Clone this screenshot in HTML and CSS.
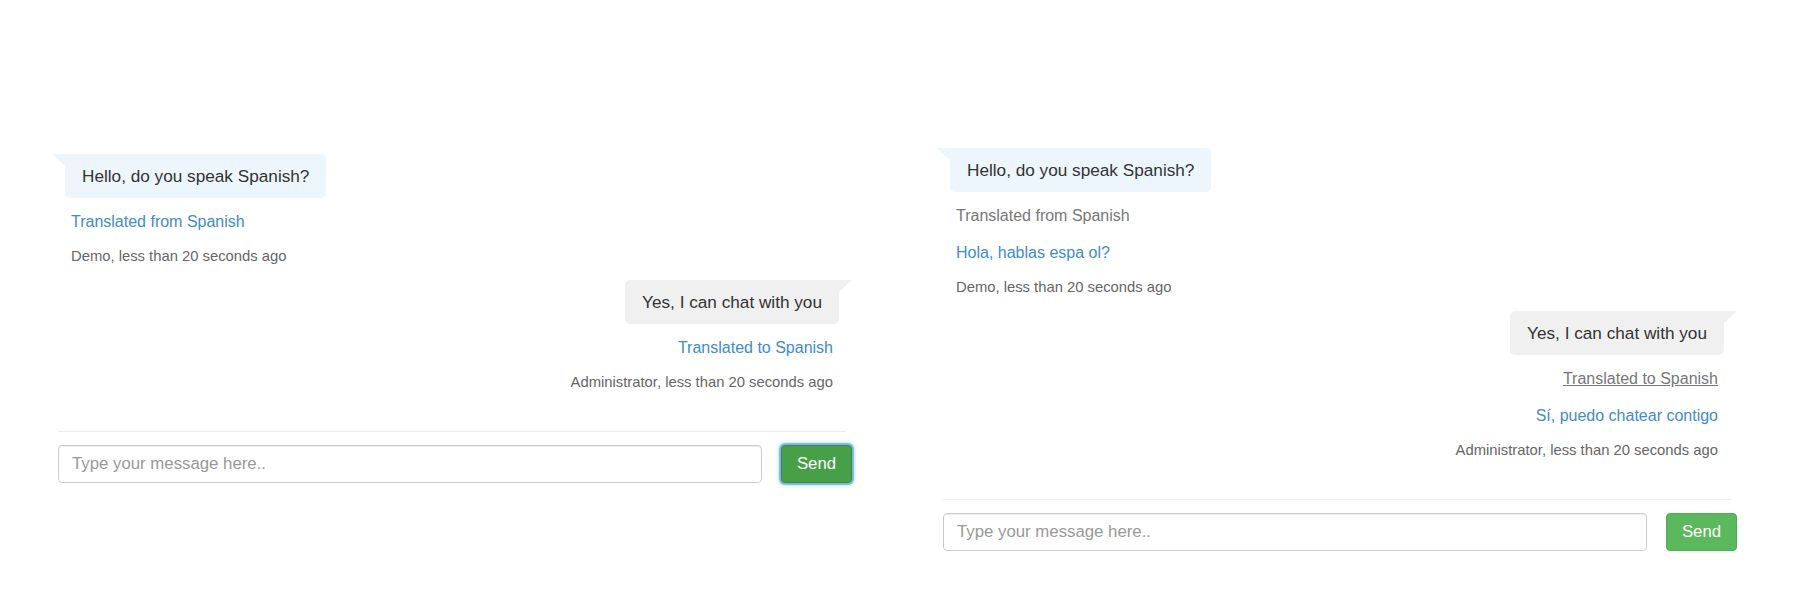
FILE: index.html
```html
<!DOCTYPE html>
<html>
<head>
<meta charset="utf-8">
<link rel="stylesheet" href="styles.css">
</head>
<body>
<div class="page">
  <section class="panel panel-a">
    <div class="messages">
      <div class="msg msg-in">
        <div class="bubble bubble-in">Hello, do you speak Spanish?</div>
        <div class="line link first">Translated from Spanish</div>
        <div class="meta">Demo, less than 20 seconds ago</div>
      </div>
      <div class="msg msg-out">
        <div class="bubble bubble-out">Yes, I can chat with you</div>
        <div class="line link first">Translated to Spanish</div>
        <div class="meta">Administrator, less than 20 seconds ago</div>
      </div>
    </div>
    <hr class="divider">
    <form class="composer">
      <input class="field" type="text" placeholder="Type your message here..">
      <button class="send send-active" type="button">Send</button>
    </form>
  </section>

  <section class="panel panel-b">
    <div class="messages">
      <div class="msg msg-in">
        <div class="bubble bubble-in">Hello, do you speak Spanish?</div>
        <div class="line muted first">Translated from Spanish</div>
        <div class="line translation">Hola, hablas espa ol?</div>
        <div class="meta">Demo, less than 20 seconds ago</div>
      </div>
      <div class="msg msg-out">
        <div class="bubble bubble-out">Yes, I can chat with you</div>
        <div class="line muted underlined first">Translated to Spanish</div>
        <div class="line translation">Sí, puedo chatear contigo</div>
        <div class="meta">Administrator, less than 20 seconds ago</div>
      </div>
    </div>
    <hr class="divider">
    <form class="composer">
      <input class="field" type="text" placeholder="Type your message here..">
      <button class="send" type="button">Send</button>
    </form>
  </section>
</div>
</body>
</html>
```

FILE: styles.css
```css
html, body {
  margin: 0;
  padding: 0;
  background: #fff;
}

body {
  font-family: "Liberation Sans", Arial, Helvetica, sans-serif;
  color: #333;
  width: 1800px;
  height: 600px;
  overflow: hidden;
}

.page {
  display: flex;
  align-items: flex-start;
  padding-left: 58px;
  gap: 97px;
}

.panel {
  width: 788px;
  flex: 0 0 788px;
}

.panel-a {
  padding-top: 154px;
}

.panel-b {
  padding-top: 148px;
}

.messages {
  margin: 0 -6px;
}

.msg {
  padding: 0 19px;
  margin-bottom: 14px;
}

.msg:last-child {
  margin-bottom: 0;
}

.msg-in {
  text-align: left;
}

.msg-out {
  text-align: right;
}

.bubble {
  display: inline-block;
  position: relative;
  padding: 11px 17px;
  font-size: 17.2px;
  line-height: 22px;
  color: #333;
  border-radius: 5px;
}

.bubble-in {
  background: #edf6fd;
  margin-left: -6px;
  border-top-left-radius: 0;
}

.bubble-in::before {
  content: "";
  position: absolute;
  left: -13px;
  top: 0;
  width: 0;
  height: 0;
  border-top: 12px solid #edf6fd;
  border-left: 13px solid transparent;
}

.bubble-out {
  background: #f0f0f0;
  margin-right: -6px;
  border-top-right-radius: 0;
}

.bubble-out::before {
  content: "";
  position: absolute;
  right: -13px;
  top: 0;
  width: 0;
  height: 0;
  border-top: 12px solid #f0f0f0;
  border-right: 13px solid transparent;
}

.line {
  font-size: 16px;
  line-height: 22px;
  margin-top: 15px;
}

.line.first {
  margin-top: 13px;
}

.link {
  color: #428bca;
}

.muted {
  color: #777;
}

.underlined {
  text-decoration: underline;
}

.translation {
  color: #428bca;
}

.meta {
  font-size: 14.8px;
  line-height: 20px;
  margin-top: 13px;
  color: #666;
}

.divider {
  border: 0;
  border-top: 1px solid #eee;
  margin: 39px 0 0;
  height: 0;
}

.composer {
  display: flex;
  align-items: center;
  gap: 19px;
  margin: 13px -6px 0 0;
}

.field {
  flex: 1;
  height: 38px;
  box-sizing: border-box;
  border: 1px solid #ccc;
  border-radius: 4px;
  padding: 0 13px;
  font-family: "Liberation Sans", Arial, Helvetica, sans-serif;
  font-size: 16.8px;
  color: #555;
  box-shadow: inset 0 1px 1px rgba(0, 0, 0, 0.075);
  outline: none;
}

.field::placeholder {
  color: #999;
}

.send {
  width: 71px;
  height: 38px;
  box-sizing: border-box;
  background: #5cb85c;
  border: 1px solid #4cae4c;
  border-radius: 4px;
  color: #fff;
  font-family: "Liberation Sans", Arial, Helvetica, sans-serif;
  font-size: 16.8px;
  padding: 0;
  cursor: pointer;
}

.send-active {
  background: #479f47;
  border-color: #3d8b3d;
  box-shadow: 0 0 0 2px rgba(102, 175, 233, 0.8), 0 0 4px 2px rgba(102, 175, 233, 0.5);
}
```
